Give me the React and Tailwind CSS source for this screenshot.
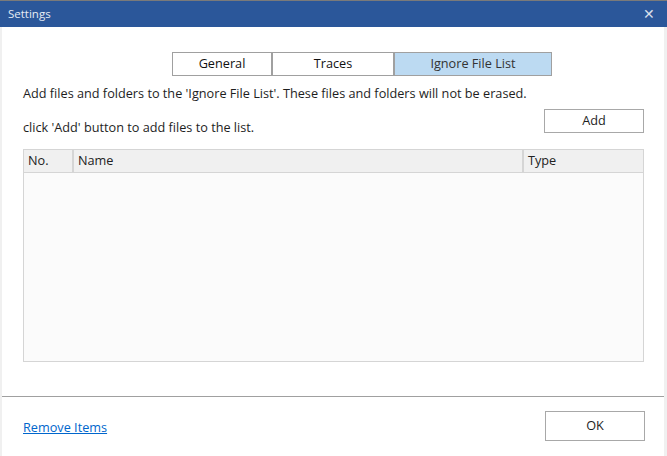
import React, { useState } from 'react'

export default function App() {
  const [tab, setTab] = useState('ignore')
  const tabs = [
    { id: 'general', label: 'General', w: 'w-[98px]' },
    { id: 'traces', label: 'Traces', w: 'w-[122px]' },
    { id: 'ignore', label: 'Ignore File List', w: 'w-[158px]' },
  ]

  return (
    <div className="w-[667px] h-[456px] flex flex-col bg-white text-[#1e1e1e] font-['Open_Sans',sans-serif] overflow-hidden">
      <div className="h-px bg-[#7a7a7a]" />
      <div className="h-[26px] bg-[#2b579a] flex items-center justify-between pl-2 pr-[12px]">
        <span className="text-[11.5px] text-[#e6ecf5]">Settings</span>
        <span className="text-[#d8dfea] text-[14px] leading-none">✕</span>
      </div>
      <div className="flex-1 flex flex-col border-l-2 border-r-[3px] border-[#f0f0f0]">
        <div className="flex pt-[25px] pl-[170px]">
          <div className="flex border border-[#a0a0a0]">
            {tabs.map((t, i) => (
              <button
                key={t.id}
                onClick={() => setTab(t.id)}
                className={`${t.w} h-[22px] text-[12.7px] flex items-center justify-center ${i > 0 ? 'border-l-2 border-[#a0a0a0]' : ''} ${tab === t.id ? 'bg-[#bcdaf2] text-[#333]' : 'bg-white text-[#111]'}`}
              >
                {t.label}
              </button>
            ))}
          </div>
        </div>
        <div className="pl-[21px] pr-[20px]">
          <p className="text-[12.7px] mt-[8px] leading-[18px]">
            Add files and folders to the 'Ignore File List'. These files and folders will not be erased.
          </p>
          <div className="flex items-end justify-between mt-[7px]">
            <p className="text-[12.7px] leading-[18px] mb-[-3px]">click 'Add' button to add files to the list.</p>
            <button className="w-[100px] h-[24px] border border-[#a8a8a8] bg-white text-[12.7px]">Add</button>
          </div>
          <div className="mt-[16px] border border-[#d5d5d5] bg-[#fbfbfb] h-[213px]">
            <div className="flex h-[23px] bg-[#f0f0f0] border-b border-[#d5d5d5] text-[12.7px] text-[#222]">
              <div className="w-[50px] border-r-2 border-[#d5d5d5] flex items-center pl-[4px]">No.</div>
              <div className="w-[450px] border-r-2 border-[#d5d5d5] flex items-center pl-[4px]">Name</div>
              <div className="flex-1 flex items-center pl-[4px]">Type</div>
            </div>
          </div>
        </div>
        <div className="mt-[34px] border-t border-[#a0a0a0]" />
        <div className="flex items-center justify-between pl-[21px] pr-[19px] pt-[14px]">
          <a href="#" className="text-[12.7px] text-[#0066cc] underline mt-[4px]">Remove Items</a>
          <button className="w-[100px] h-[30px] border border-[#a8a8a8] bg-white text-[12.7px]">OK</button>
        </div>
      </div>
    </div>
  )
}
